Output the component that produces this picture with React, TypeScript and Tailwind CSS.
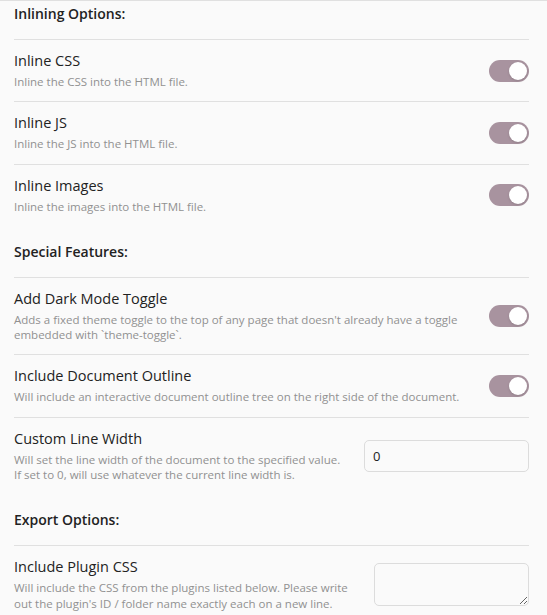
import React, { useState } from "react";

type ToggleRow = { kind: "toggle"; name: string; desc: React.ReactNode; on: boolean };
type InputRow = { kind: "input"; name: string; desc: React.ReactNode; value: string };
type AreaRow = { kind: "area"; name: string; desc: React.ReactNode; value: string };
type Row = ToggleRow | InputRow | AreaRow;

const sections: { title: string; rows: Row[] }[] = [
  {
    title: "Inlining Options:",
    rows: [
      { kind: "toggle", name: "Inline CSS", desc: "Inline the CSS into the HTML file.", on: true },
      { kind: "toggle", name: "Inline JS", desc: "Inline the JS into the HTML file.", on: true },
      { kind: "toggle", name: "Inline Images", desc: "Inline the images into the HTML file.", on: true },
    ],
  },
  {
    title: "Special Features:",
    rows: [
      {
        kind: "toggle",
        name: "Add Dark Mode Toggle",
        desc: (
          <>
            Adds a fixed theme toggle to the top of any page that doesn't already have a toggle
            <br />
            embedded with `theme-toggle`.
          </>
        ),
        on: true,
      },
      {
        kind: "toggle",
        name: "Include Document Outline",
        desc: "Will include an interactive document outline tree on the right side of the document.",
        on: true,
      },
      {
        kind: "input",
        name: "Custom Line Width",
        desc: (
          <>
            Will set the line width of the document to the specified value.
            <br />
            If set to 0, will use whatever the current line width is.
          </>
        ),
        value: "0",
      },
    ],
  },
  {
    title: "Export Options:",
    rows: [
      {
        kind: "area",
        name: "Include Plugin CSS",
        desc: (
          <>
            Will include the CSS from the plugins listed below. Please write
            <br />
            out the plugin's ID / folder name exactly each on a new line.
          </>
        ),
        value: "",
      },
    ],
  },
];

function Toggle({ initial }: { initial: boolean }) {
  const [on, setOn] = useState(initial);
  return (
    <button
      onClick={() => setOn(!on)}
      className={`relative h-[22px] w-[40px] shrink-0 rounded-full transition-colors ${
        on ? "bg-[#a8939f]" : "bg-[#d6d6d6]"
      }`}
    >
      <span
        className={`absolute top-[2px] h-[18px] w-[18px] rounded-full bg-white shadow-sm transition-all ${
          on ? "left-[20px]" : "left-[2px]"
        }`}
      />
    </button>
  );
}

export default function App() {
  return (
    <div
      className="h-[615px] w-full overflow-hidden border-t border-[#e0e0e0] bg-[#fafafa] pl-[14px] pr-[18px] text-[#222222]"
      style={{ fontFamily: '"Segoe UI", "Open Sans", "Noto Sans", sans-serif' }}
    >
      {sections.map((section, si) => (
        <div key={section.title}>
          {/* Section heading */}
          <div
            className={`${si === 0 ? "pt-[4px]" : "pt-[17px]"} pb-[16px] text-[14px] font-semibold leading-[18px]`}
          >
            {section.title}
          </div>

          {section.rows.map((row) => (
            <div key={row.name} className="flex items-center border-t border-[#e0e0e0] py-3">
              <div className="mr-4 min-w-0 flex-1">
                <div className="text-[14.5px] leading-[18px] text-[#222222]">{row.name}</div>
                <div className="pt-1 text-[11.5px] leading-[15.3px] text-[#919191]">{row.desc}</div>
              </div>
              {row.kind === "toggle" && <Toggle initial={row.on} />}
              {row.kind === "input" && (
                <input
                  type="text"
                  defaultValue={row.value}
                  className="h-[32px] w-[165px] shrink-0 rounded-[5px] border border-[#dcdcdc] bg-[#fafafa] px-2 text-[13px] text-[#222222] outline-none"
                />
              )}
              {row.kind === "area" && (
                <textarea
                  defaultValue={row.value}
                  className="h-[43px] w-[155px] shrink-0 rounded-[5px] border border-[#dcdcdc] bg-[#fafafa] px-2 py-1 text-[13px] outline-none"
                />
              )}
            </div>
          ))}
        </div>
      ))}
    </div>
  );
}
